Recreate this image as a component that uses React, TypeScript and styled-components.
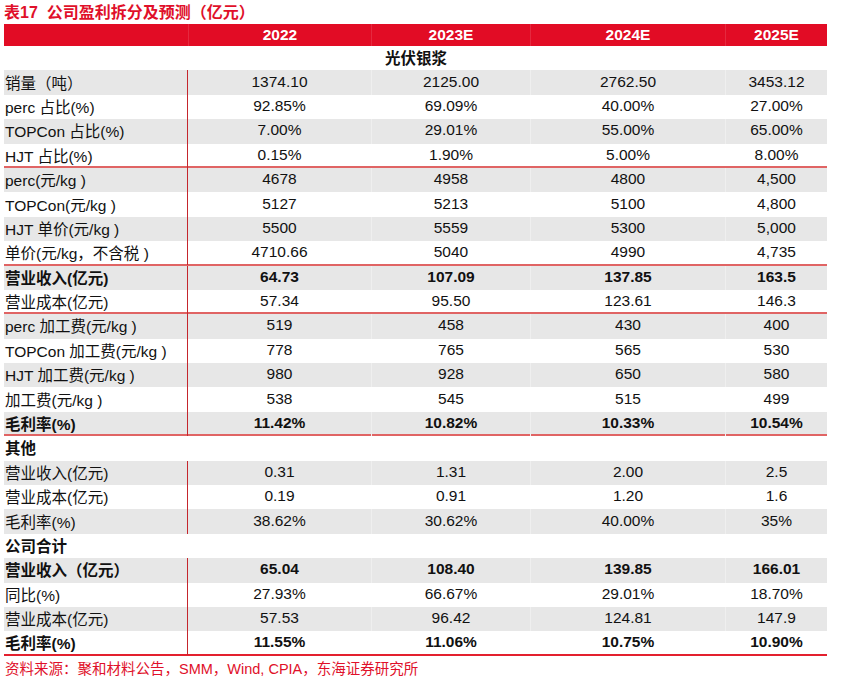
import styled, { createGlobalStyle } from "styled-components"

const GlobalStyle = createGlobalStyle`
  body {
    margin: 0;
    background: #ffffff;
    font-family: "Liberation Sans", Arial, "Noto Sans CJK SC", sans-serif;
  }
`

type DataRow = {
  label: string
  values: string[]
  bold?: boolean
  line?: boolean
}

type Group = {
  title: string
  centered?: boolean
  rows: DataRow[]
}

const years = ["2022", "2023E", "2024E", "2025E"]

const groups: Group[] = [
  {
    title: "光伏银浆",
    centered: true,
    rows: [
      { label: "销量（吨）", values: ["1374.10", "2125.00", "2762.50", "3453.12"] },
      { label: "perc 占比(%)", values: ["92.85%", "69.09%", "40.00%", "27.00%"] },
      { label: "TOPCon 占比(%)", values: ["7.00%", "29.01%", "55.00%", "65.00%"] },
      { label: "HJT 占比(%)", values: ["0.15%", "1.90%", "5.00%", "8.00%"], line: true },
      { label: "perc(元/kg )", values: ["4678", "4958", "4800", "4,500"] },
      { label: "TOPCon(元/kg )", values: ["5127", "5213", "5100", "4,800"] },
      { label: "HJT 单价(元/kg )", values: ["5500", "5559", "5300", "5,000"] },
      { label: "单价(元/kg，不含税 )", values: ["4710.66", "5040", "4990", "4,735"], line: true },
      { label: "营业收入(亿元)", values: ["64.73", "107.09", "137.85", "163.5"], bold: true },
      { label: "营业成本(亿元)", values: ["57.34", "95.50", "123.61", "146.3"], line: true },
      { label: "perc 加工费(元/kg )", values: ["519", "458", "430", "400"] },
      { label: "TOPCon 加工费(元/kg )", values: ["778", "765", "565", "530"] },
      { label: "HJT 加工费(元/kg )", values: ["980", "928", "650", "580"] },
      { label: "加工费(元/kg )", values: ["538", "545", "515", "499"] },
      { label: "毛利率(%)", values: ["11.42%", "10.82%", "10.33%", "10.54%"], bold: true, line: true },
    ],
  },
  {
    title: "其他",
    rows: [
      { label: "营业收入(亿元)", values: ["0.31", "1.31", "2.00", "2.5"] },
      { label: "营业成本(亿元)", values: ["0.19", "0.91", "1.20", "1.6"] },
      { label: "毛利率(%)", values: ["38.62%", "30.62%", "40.00%", "35%"] },
    ],
  },
  {
    title: "公司合计",
    rows: [
      { label: "营业收入（亿元）", values: ["65.04", "108.40", "139.85", "166.01"], bold: true },
      { label: "同比(%)", values: ["27.93%", "66.67%", "29.01%", "18.70%"] },
      { label: "营业成本(亿元)", values: ["57.53", "96.42", "124.81", "147.9"] },
      { label: "毛利率(%)", values: ["11.55%", "11.06%", "10.75%", "10.90%"], bold: true },
    ],
  },
]

const App = () => {
  let stripe = 0
  return (
    <>
      <GlobalStyle />
      <Page>
        <Title>表17&nbsp; 公司盈利拆分及预测（亿元）</Title>
        <Table>
          <HeaderRow>
            <HeaderCell />
            {years.map((y) => (
              <HeaderCell key={y}>{y}</HeaderCell>
            ))}
          </HeaderRow>
          {groups.map((group, gi) => {
            stripe = 0
            return (
              <div key={group.title}>
                <SectionRow centered={group.centered}>{group.title}</SectionRow>
                {group.rows.map((row, ri) => {
                  const gray = stripe++ % 2 === 0
                  const last = gi === groups.length - 1 && ri === group.rows.length - 1
                  return (
                    <Row key={row.label + ri} gray={gray} line={row.line} bottom={last}>
                      <LabelCell bold={row.bold}>{row.label}</LabelCell>
                      {row.values.map((v, vi) => (
                        <ValueCell key={vi} bold={row.bold} gray={gray} first={vi === 0}>
                          {v}
                        </ValueCell>
                      ))}
                    </Row>
                  )
                })}
              </div>
            )
          })}
        </Table>
        <Source>资料来源：聚和材料公告，SMM，Wind, CPIA，东海证券研究所</Source>
      </Page>
    </>
  )
}

export default App

const Page = styled.div`
  width: 823px;
  padding-left: 4px;
  display: flex;
  flex-direction: column;
`
const Title = styled.div`
  height: 24px;
  display: flex;
  align-items: center;
  padding-bottom: 2px;
  box-sizing: border-box;
  font-size: 16px;
  font-weight: bold;
  color: #e0102a;
  white-space: nowrap;
`
const Table = styled.div`
  display: flex;
  flex-direction: column;
`
const columns = "184px 183px 159px 195px 102px"

const HeaderRow = styled.div`
  display: grid;
  grid-template-columns: ${columns};
  height: 22px;
  background: #e20c25;
`
const HeaderCell = styled.div`
  display: flex;
  align-items: center;
  justify-content: center;
  color: #ffffff;
  font-size: 15.5px;
  font-weight: bold;
  & + & {
    border-left: 1px solid rgba(255, 255, 255, 0.12);
  }
`
const SectionRow = styled.div<{ centered?: boolean }>`
  height: 24.4px;
  display: flex;
  align-items: center;
  justify-content: ${(p) => (p.centered ? "center" : "flex-start")};
  padding: 0 0 2px 1px;
  box-sizing: border-box;
  font-size: 15.5px;
  font-weight: bold;
  color: #111111;
`
const Row = styled.div<{ gray: boolean; line?: boolean; bottom?: boolean }>`
  display: grid;
  grid-template-columns: ${columns};
  height: 24.4px;
  box-sizing: border-box;
  background: ${(p) => (p.gray ? "#e7e7e7" : "#ffffff")};
  border-bottom: ${(p) =>
    p.bottom ? "2px solid #e3202e" : p.line ? "2px solid #e06464" : "none"};
`
const LabelCell = styled.div<{ bold?: boolean }>`
  display: flex;
  align-items: center;
  padding: 0 0 2px 1px;
  border-right: 1px solid #c5262d;
  font-size: 15.5px;
  font-weight: ${(p) => (p.bold ? "bold" : "normal")};
  color: #111111;
  white-space: nowrap;
`
const ValueCell = styled.div<{ bold?: boolean; gray: boolean; first: boolean }>`
  display: flex;
  align-items: center;
  justify-content: center;
  padding-bottom: 2px;
  border-left: ${(p) =>
    p.first ? "none" : p.gray ? "1px solid #efefef" : "1px solid transparent"};
  font-size: 15.5px;
  font-weight: ${(p) => (p.bold ? "bold" : "normal")};
  color: #111111;
`
const Source = styled.div`
  height: 24px;
  display: flex;
  align-items: center;
  padding-left: 1px;
  font-size: 14.5px;
  color: #e0102a;
  white-space: nowrap;
`
